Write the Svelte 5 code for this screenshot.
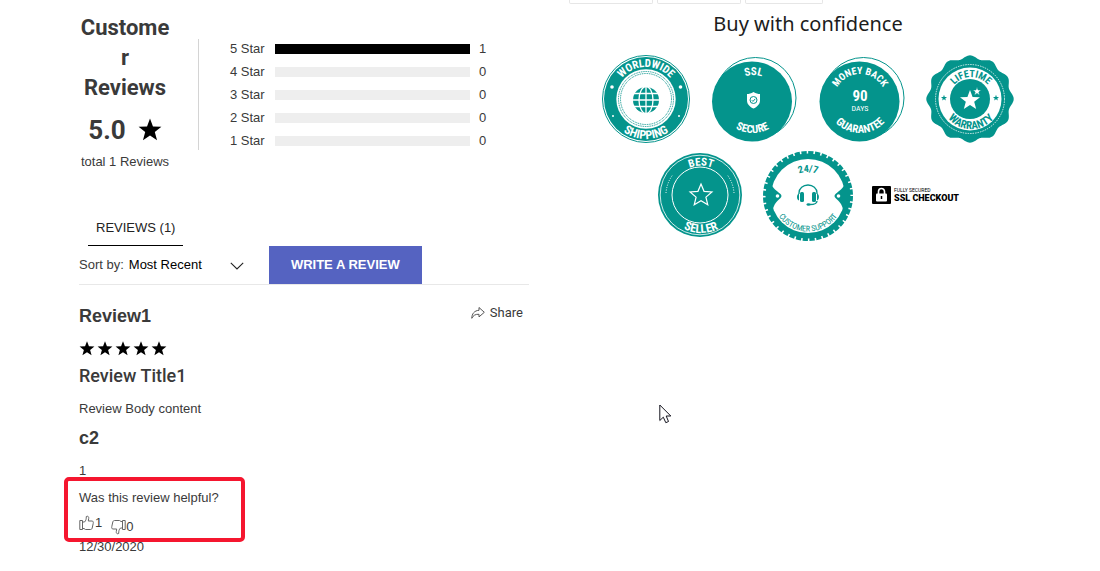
<script lang="ts">
  interface Rating {
    stars: number
    count: number
  }

  const ratings: Rating[] = [
    { stars: 5, count: 1 },
    { stars: 4, count: 0 },
    { stars: 3, count: 0 },
    { stars: 2, count: 0 },
    { stars: 1, count: 0 },
  ]
  const total = ratings.reduce((sum, r) => sum + r.count, 0)

  let sort = $state('Most Recent')

  // Text baselines for the round badges
  function over(cx: number, cy: number, r: number) {
    return `M${cx - r} ${cy}A${r} ${r} 0 0 1 ${cx + r} ${cy}`
  }

  function under(cx: number, cy: number, r: number) {
    return `M${cx - r} ${cy}A${r} ${r} 0 0 0 ${cx + r} ${cy}`
  }

  function star(cx: number, cy: number, r: number, inner = 0.42) {
    const points: string[] = []
    for (let i = 0; i < 10; i++) {
      const a = (Math.PI * i) / 5 - Math.PI / 2
      const d = i % 2 ? r * inner : r
      points.push(`${(cx + d * Math.cos(a)).toFixed(2)},${(cy + d * Math.sin(a)).toFixed(2)}`)
    }
    return points.join(' ')
  }

  function rosette(cx: number, cy: number, r: number, wave: number, lobes: number) {
    const points: string[] = []
    for (let i = 0; i < 240; i++) {
      const a = (Math.PI * i) / 120
      const d = r + wave * Math.cos(lobes * a)
      points.push(`${(cx + d * Math.sin(a)).toFixed(2)},${(cy - d * Math.cos(a)).toFixed(2)}`)
    }
    return points.join(' ')
  }
</script>

{#snippet curved(id: string, d: string, text: string, size: string)}
  <path {id} {d} fill="none" />
  <text class={size}><textPath href="#{id}" startOffset="50%">{text}</textPath></text>
{/snippet}

<div class="page">
  <main class="reviews">
    <section class="summary">
      <div class="score">
        <h2>Customer Reviews</h2>
        <div class="average">
          <span>5.0</span>
          <svg width="24" height="24" viewBox="0 0 24 24" aria-hidden="true">
            <polygon points={star(12, 12.5, 12)} />
          </svg>
        </div>
        <p>total {total} Reviews</p>
      </div>

      <div class="bars">
        {#each ratings as rating}
          <div class="bar-row">
            <span>{rating.stars} Star</span>
            <div class="track"><div class="fill" style="width: {(rating.count / total) * 100}%"></div></div>
            <span>{rating.count}</span>
          </div>
        {/each}
      </div>
    </section>

    <nav class="tabs">
      <a href="#reviews">REVIEWS (1)</a>
    </nav>

    <div class="toolbar" id="reviews">
      <label for="sort">Sort by:</label>
      <div class="select">
        <select id="sort" bind:value={sort}>
          <option>Most Recent</option>
          <option>Oldest</option>
        </select>
        <svg width="14" height="8" viewBox="0 0 14 8" aria-hidden="true">
          <path d="M.8.8 7 7 13.200.8" fill="none" stroke="#222" stroke-width="1.1" />
        </svg>
      </div>
      <button class="write" type="button">WRITE A REVIEW</button>
    </div>

    <article class="review">
      <header>
        <h3>Review1</h3>
        <button class="share" type="button">
          <svg width="14" height="14" viewBox="0 0 14 14" aria-hidden="true">
            <path
              d="M8 1.500 13.300 6.300 8 10.900V8.300C4.500 8 2.300 9.300.8 12.300.8 7.900 3.400 4.500 8 4.300Z"
              fill="none"
              stroke="#555"
              stroke-linejoin="round"
            />
          </svg>
          Share
        </button>
      </header>

      <svg class="stars" width="90" height="18" viewBox="0 0 90 18" role="img" aria-label="5 of 5">
        {#each [8, 26, 44, 62, 80] as x}
          <polygon points={star(x, 10, 7.8)} />
        {/each}
      </svg>

      <h3 class="title">Review Title1</h3>
      <p class="body">Review Body content</p>
      <h3>c2</h3>
      <p class="value">1</p>

      <div class="helpful">
        <p>Was this review helpful?</p>
        <div class="votes">
          <button class="up" type="button" aria-label="Helpful, 1">
            <svg width="16" height="16" viewBox="0 0 16 16" aria-hidden="true">
              <path d="M.8 5.500h2.700v9H.8ZM3.500 7h2C7 5.500 7.300 4 7.300 1.500 9 .6 10 2 9.700 3.500L9.300 6H13c1.300 0 1.500 1.300 1.200 2.500l-1 4.500c-.3 1-.8 1.500-1.700 1.500H6.500L5 13.500H3.500" />
            </svg>
            <span>1</span>
          </button>
          <button class="down" type="button" aria-label="Not helpful, 0">
            <svg width="16" height="16" viewBox="0 0 16 16" aria-hidden="true">
              <path d="M15.200 10.500h-2.700v-9h2.700ZM12.500 9h-2C9 10.500 8.700 12 8.700 14.500 7 15.400 6 14 6.300 12.500L6.700 10H3C1.700 10 1.500 8.700 1.800 7.500l1-4.500c.3-1 .8-1.500 1.700-1.500h5l1.500 1h1.500" />
            </svg>
            <span>0</span>
          </button>
        </div>
      </div>

      <time datetime="2020-12-30">12/30/2020</time>
    </article>
  </main>

  <aside class="trust">
    <div class="options">
      <span class="wide"></span>
      <span class="wide"></span>
      <span></span>
    </div>
    <h2>Buy with confidence</h2>

    <div class="badges">
      <!-- Worldwide shipping -->
      <svg class="badge" viewBox="0 0 88 88">
        <circle cx="44" cy="44" r="43.500" fill="none" stroke="#04948c" />
        <circle cx="44" cy="44" r="42" fill="#04948c" />
        <circle cx="44" cy="44" r="29.700" fill="#fff" />
        <circle cx="44" cy="44" r="27.500" fill="none" stroke="#04948c" stroke-dasharray="1 .8" />
        <circle cx="44" cy="44" r="25.500" fill="none" stroke="#04948c" stroke-dasharray="1 .8" />
        <g fill="none" stroke="#fff" stroke-width="1.300">
          <circle cx="44" cy="45" r="13" fill="#04948c" stroke="none" />
          <ellipse cx="44" cy="45" rx="7" ry="13.500" />
          <path d="M44 31v28M30 45h28M32 38.500h24M32 51.500h24" />
        </g>
        <circle cx="10" cy="32" r="1.800" fill="#fff" />
        <circle cx="78.500" cy="32" r="1.800" fill="#fff" />
        <circle cx="11" cy="61" r="1" fill="#fff" />
        <circle cx="77" cy="61" r="1" fill="#fff" />
        {@render curved('ship-a', over(44, 44, 32), 'WORLDWIDE', 'large')}
        {@render curved('ship-b', under(44, 44, 40), 'SHIPPING', 'larger')}
      </svg>

      <!-- SSL secure -->
      <svg class="badge" viewBox="0 0 88 88">
        <circle cx="45.500" cy="43" r="40.500" fill="none" stroke="#04948c" />
        <circle cx="42" cy="46.500" r="40" fill="#04948c" />
        <path d="M43.500 37c2.500 1.500 4.500 2 6.500 2V45.500c0 3.800-3 6.500-6.500 8-3.500-1.500-6.500-4.200-6.500-8v-6.500c2 0 4-.5 6.500-2Z" fill="#fff" />
        <circle cx="43.500" cy="45" r="3.500" fill="none" stroke="#04948c" />
        <path d="m41.800 45.200 1.200 1.200 2.300-2.600" fill="none" stroke="#04948c" />
        {@render curved('ssl-a', over(43.5, 44, 24), 'SSL', 'large')}
        {@render curved('ssl-b', under(42.5, 44, 34), 'SECURE', 'large')}
      </svg>

      <!-- Money back -->
      <svg class="badge" viewBox="0 0 88 88">
        <circle cx="45.500" cy="43" r="40.500" fill="none" stroke="#04948c" />
        <circle cx="41.500" cy="46.500" r="40" fill="#04948c" />
        {@render curved('money-a', over(42, 45, 26), 'MONEY BACK', 'medium')}
        {@render curved('money-b', under(42, 44, 34), 'GUARANTEE', 'large')}
        <text class="huge" x="42" y="46">90</text>
        <text class="small" x="42" y="56">DAYS</text>
      </svg>

      <!-- Lifetime warranty -->
      <svg class="badge" viewBox="0 0 88 88">
        <polygon points={rosette(44, 44, 42, 1.7, 12)} fill="#04948c" />
        <circle cx="44" cy="44" r="34.500" fill="none" stroke="#fff" stroke-width=".8" stroke-dasharray="1.500 1" />
        <circle cx="44" cy="44" r="31.500" fill="#fff" />
        <circle cx="44" cy="44" r="20" fill="#04948c" />
        <polygon points={star(44, 45.5, 10.5)} fill="#fff" />
        <polygon points={star(51, 36.5, 4.5)} fill="#fff" stroke="#04948c" stroke-width=".6" />
        <polygon points={star(18, 43, 3.2)} fill="#04948c" />
        <polygon points={star(70, 43, 3.2)} fill="#04948c" />
        <g class="inverse">
          {@render curved('life-a', over(45, 44, 22), 'LIFETIME', 'medium')}
          {@render curved('life-b', under(45, 44, 30), 'WARRANTY', 'large')}
        </g>
      </svg>

      <!-- Best seller -->
      <svg class="badge" viewBox="0 0 88 88">
        <circle cx="44" cy="44" r="42" fill="#04948c" />
        <g fill="none" stroke="#fff">
          <circle cx="44" cy="44" r="39.800" stroke-width=".8" />
          <circle cx="44" cy="44" r="28" />
          <polygon points={star(45, 44.5, 11.5, 0.45)} stroke-width="1.200" />
          <path d="M10 42A34 34 0 0 1 17 23.500M78 42A34 34 0 0 0 71 23.500" stroke-dasharray="1 1.500" />
        </g>
        {@render curved('best-a', over(45, 44, 29.5), 'BEST', 'large')}
        {@render curved('best-b', under(45, 44, 38), 'SELLER', 'larger')}
      </svg>

      <!-- Customer support -->
      <svg class="badge" viewBox="0 0 88 88">
        <circle cx="44" cy="45" r="43" fill="none" stroke="#04948c" stroke-width="4" stroke-dasharray="5.250 1.500" />
        <circle cx="44" cy="45" r="42.500" fill="#04948c" />
        <circle cx="44" cy="45" r="37" fill="#fff" />
        <path d="M6 31c4 8 6 8 10.500 12 1.300 1.200 1.300 2.800 0 4-4.500 4-6 6-8 12H4V31ZM82 31c-4 8-6 8-10.500 12-1.300 1.200-1.300 2.800 0 4 4.500 4 6 6 8 12H84V31Z" fill="#04948c" />
        <circle cx="13.500" cy="45" r="1.800" fill="#fff" />
        <circle cx="74.500" cy="45" r="1.800" fill="#fff" />
        <g fill="#04948c">
          <path d="M35 43v-1a9 8 0 0 1 18 0v1M53 50c0 2-3 3.500-7 3.500" fill="none" stroke="#04948c" stroke-width="1.300" />
          <rect x="36" y="41" width="4" height="10" rx="1.500" />
          <rect x="48" y="41" width="4" height="10" rx="1.500" />
          <path d="M35 42.500v7c-2.600-.5-2.600-6.500 0-7ZM53 42.500v7c2.600-.5 2.600-6.500 0-7Z" />
          <ellipse cx="44.500" cy="53.500" rx="2" ry="1.300" />
        </g>
        <g class="inverse">
          {@render curved('help-a', over(44, 45, 24), '24/7', 'medium')}
          {@render curved('help-b', under(44, 45, 35.5), 'CUSTOMER SUPPORT', 'small')}
        </g>
      </svg>

      <div class="checkout">
        <svg width="19" height="18" viewBox="0 0 19 18" aria-hidden="true">
          <rect width="19" height="18" rx="1" />
          <rect x="4" y="7.500" width="11" height="8" rx="1" fill="#fff" />
          <path d="M6.500 8V5.500a3 3 0 0 1 6 0V8" fill="none" stroke="#fff" stroke-width="1.600" />
          <path d="M9.500 10v3" stroke="#000" stroke-width="1.500" />
        </svg>
        <div>
          <span>FULLY SECURED</span>
          <strong>SSL CHECKOUT</strong>
        </div>
      </div>
    </div>
  </aside>

  <svg class="pointer" width="13" height="20" viewBox="0 0 13 20" aria-hidden="true">
    <path d="M.8 1v15.500l3.500-3.300 2.500 5.500 2.700-1.200L7.200 12h4.600Z" fill="#fff" stroke="#15151f" stroke-linejoin="round" />
  </svg>
</div>

<style>
  :global(body) {
    background: #fff;
  }

  .page {
    position: relative;
    display: grid;
    grid-template-columns: 450fr 478fr;
    gap: 40px;
    padding: 0 53px 0 79px;
    font: 400 13px/18px 'Liberation Sans', Arial, sans-serif;
    color: #3a3a3a;
  }

  h2,
  h3,
  p {
    margin: 0;
  }

  button {
    border: 0;
    padding: 0;
    background: none;
    font: inherit;
    color: inherit;
    cursor: pointer;
  }

  /* Summary */
  .summary {
    display: flex;
    align-items: flex-start;
    padding-top: 13px;
  }

  .score {
    width: 92px;
    text-align: center;
    white-space: nowrap;
  }

  .score h2 {
    font: 700 22px/30px Roboto, sans-serif;
    white-space: normal;
    overflow-wrap: anywhere;
  }

  .average {
    display: flex;
    align-items: center;
    justify-content: center;
    gap: 12px;
    padding: 9px 0 5px;
    font: 700 26px/36px Roboto, sans-serif;
  }

  .bars {
    display: grid;
    flex: 1;
    gap: 4px;
    margin: 26px 40px 0 27px;
    padding-left: 31px;
    border-left: 1px solid #d4d4d4;
  }

  .bar-row {
    display: grid;
    grid-template-columns: 36px minmax(0, 195px) auto;
    align-items: center;
    gap: 9px;
    height: 19px;
    white-space: nowrap;
  }

  .track {
    height: 10px;
    background: #eee;
  }

  .fill {
    height: 100%;
    background: #000;
  }

  /* Tabs and toolbar */
  .tabs {
    display: flex;
    padding: 38px 9px 0;
  }

  .tabs a {
    padding: 10px 8px 8px;
    border-bottom: 1px solid #000;
    color: #222;
    text-decoration: none;
  }

  .toolbar {
    display: flex;
    align-items: center;
    border-bottom: 1px solid #e8e8e8;
  }

  .select {
    position: relative;
    width: 118px;
    margin: 0 22px 0 5px;
  }

  .select select {
    appearance: none;
    width: 100%;
    padding: 0;
    border: 0;
    background: none;
    font: inherit;
    color: #000;
  }

  .select svg {
    position: absolute;
    right: 3px;
    top: 6px;
    pointer-events: none;
  }

  .write {
    width: 153px;
    height: 38px;
    background: #5563c1;
    color: #fff;
    font-weight: 700;
  }

  /* Review */
  .review header {
    display: flex;
    justify-content: space-between;
    align-items: flex-start;
    padding: 18px 6px 0 0;
  }

  .review h3 {
    font: 700 18px/26px 'Liberation Sans', Arial, sans-serif;
  }

  .share {
    display: flex;
    align-items: center;
    gap: 5px;
    font: 400 13px/20px Roboto, sans-serif;
  }

  .stars {
    display: block;
    margin-top: 10px;
  }

  .review .title {
    margin-top: 6px;
    font: 500 18px/26px Roboto, sans-serif;
  }

  .body {
    margin: 11px 0 7px;
  }

  .value {
    margin: 11px 0 9px;
  }

  .helpful {
    position: relative;
  }

  .helpful::before {
    content: '';
    position: absolute;
    top: -12px;
    left: -15px;
    width: 173px;
    height: 57px;
    border: 4px solid #f5162f;
    border-radius: 5px;
    pointer-events: none;
  }

  .votes {
    display: flex;
    gap: 8px;
    height: 22px;
    margin-top: 7px;
  }

  .votes button {
    display: flex;
    align-items: center;
    line-height: 18px;
  }

  .votes .up {
    align-self: flex-start;
  }

  .votes .down {
    align-self: flex-end;
  }

  .votes path {
    fill: none;
    stroke: #666;
    stroke-linejoin: round;
  }

  time {
    display: block;
    margin-top: 2px;
  }

  /* Trust badges */
  .options {
    display: flex;
    gap: 4px;
  }

  .options span {
    box-sizing: border-box;
    width: 78px;
    height: 4px;
    border: 1px solid #e6e6e6;
    border-top: 0;
    border-radius: 0 0 2px 2px;
  }

  .options .wide {
    width: 84px;
  }

  .trust h2 {
    margin: 5px 0 16px;
    text-align: center;
    font: 400 20px/30px 'Noto Sans', 'Open Sans', sans-serif;
    color: #1c1c1c;
  }

  .badges {
    display: flex;
    flex-wrap: wrap;
    justify-content: center;
    align-items: center;
    gap: 8px 20px;
  }

  .badge {
    display: block;
    width: 88px;
    height: 88px;
    overflow: visible;
  }

  .badge text {
    font-family: 'Liberation Sans Narrow', 'Roboto Condensed', 'Liberation Sans', sans-serif;
    font-weight: 700;
    text-anchor: middle;
    fill: #fff;
  }

  .badge .inverse text {
    fill: #04948c;
  }

  .badge .small {
    font-size: 8px;
    font-weight: 400;
  }

  .badge .medium {
    font-size: 10px;
  }

  .badge .large {
    font-size: 11px;
  }

  .badge .larger {
    font-size: 12px;
  }

  .badge .huge {
    font-size: 15px;
  }

  .checkout {
    display: flex;
    align-items: center;
    gap: 3px;
    width: 88px;
    color: #000;
    font-family: Roboto, sans-serif;
    white-space: nowrap;
  }

  .checkout svg {
    flex-shrink: 0;
  }

  .checkout span,
  .checkout strong {
    display: block;
  }

  .checkout span {
    font-size: 5px;
    line-height: 7px;
  }

  .checkout strong {
    font-size: 9px;
    line-height: 9px;
    font-weight: 900;
  }

  .pointer {
    position: absolute;
    top: 404px;
    left: 659px;
  }
</style>
